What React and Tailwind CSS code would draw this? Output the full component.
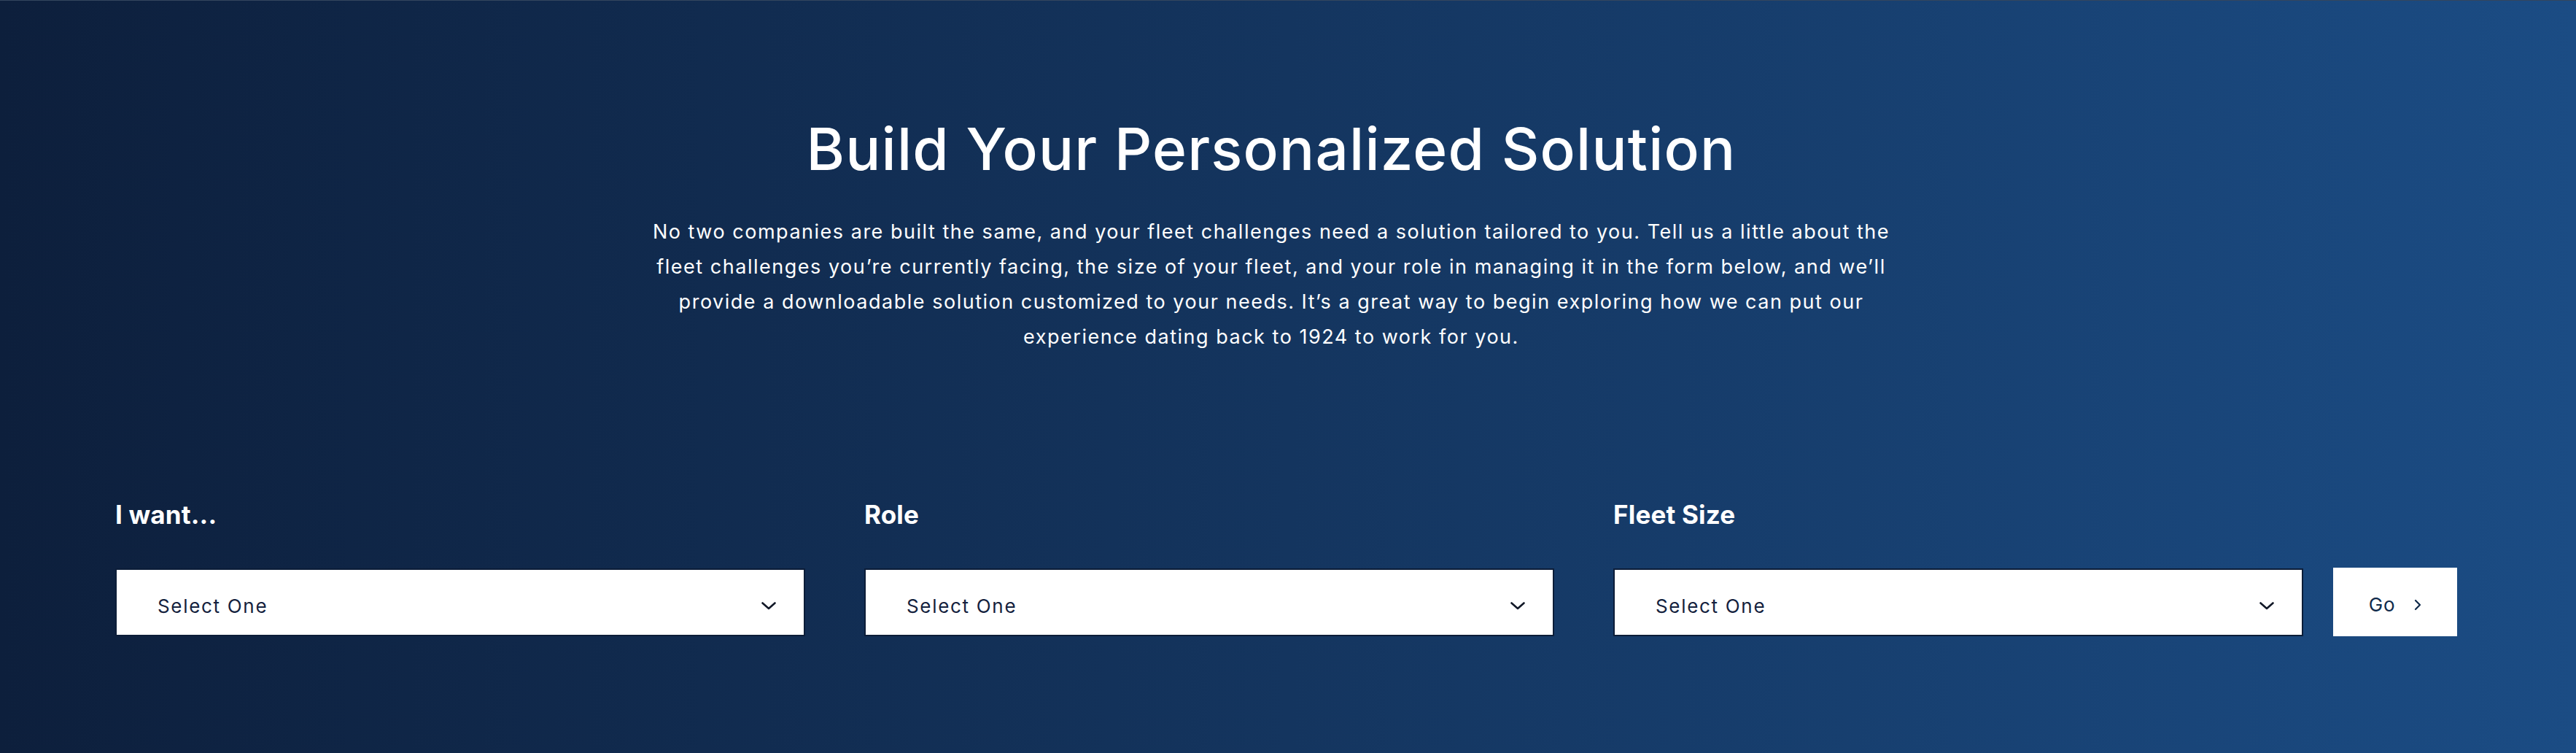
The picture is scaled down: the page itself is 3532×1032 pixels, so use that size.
import { useState } from 'react';

const FIELDS = [
  { id: 'want', label: 'I want...' },
  { id: 'role', label: 'Role' },
  { id: 'fleet', label: 'Fleet Size' },
];

function Chevron() {
  return (
    <svg width="20" height="11" viewBox="0 0 20 11" fill="none" className="shrink-0">
      <path d="M1.5 1.5 L10 9 L18.5 1.5" stroke="#111827" strokeWidth="2.6" strokeLinecap="round" strokeLinejoin="round" />
    </svg>
  );
}

function SelectBox({ label }) {
  const [value] = useState('Select One');
  return (
    <div className="flex-1 min-w-0 flex flex-col">
      <label className="text-[35px] leading-[40px] font-bold text-white tracking-[0.005em]">{label}</label>
      <button className="mt-[54px] h-[93px] w-full bg-white border-2 border-[#0c1d38] flex items-center justify-between pl-[56px] pr-[38px] pt-[10px]">
        <span className="text-[26px] leading-[30px] text-[#14213d] tracking-[0.065em]">{value}</span>
        <Chevron />
      </button>
    </div>
  );
}

export default function App() {
  return (
    <section
      className="w-full h-[1032px] border-t border-[#34465e] bg-[linear-gradient(90deg,#0d1f3c_0%,#14355f_50%,#1b4c84_100%)] overflow-hidden"
      style={{ fontFamily: 'Inter, "Noto Sans", sans-serif' }}
    >
      {/* ── Heading ── */}
      <div className="flex flex-col items-center text-center pt-[154px] pr-[46px]">
        <h1 className="text-[80px] leading-[98px] font-medium text-white tracking-[0.015em]">
          Build Your Personalized Solution
        </h1>
        <p className="mt-[41px] text-[27px] leading-[48px] text-white tracking-[0.056em]">
          No two companies are built the same, and your fleet challenges need a solution tailored to you. Tell us a little about the
          <br />
          fleet challenges you’re currently facing, the size of your fleet, and your role in managing it in the form below, and we’ll
          <br />
          provide a downloadable solution customized to your needs. It’s a great way to begin exploring how we can put our
          <br />
          experience dating back to 1924 to work for you.
        </p>
      </div>

      {/* ── Form ── */}
      <div className="flex items-end gap-[41px] pl-[158px] pr-[163px] mt-[199px]">
        <div className="flex-1 flex gap-[81px]">
          {FIELDS.map((f) => (
            <SelectBox key={f.id} label={f.label} />
          ))}
        </div>
        <button className="w-[170px] h-[94px] bg-white flex items-center justify-center gap-[26px] pt-[8px]">
          <span className="text-[26px] leading-[30px] text-[#0f2a4a] tracking-[0.03em]">Go</span>
          <svg width="10" height="16" viewBox="0 0 10 16" fill="none">
            <path d="M2 2 L8 8 L2 14" stroke="#0f2a4a" strokeWidth="2.2" strokeLinecap="round" strokeLinejoin="round" />
          </svg>
        </button>
      </div>
    </section>
  );
}
